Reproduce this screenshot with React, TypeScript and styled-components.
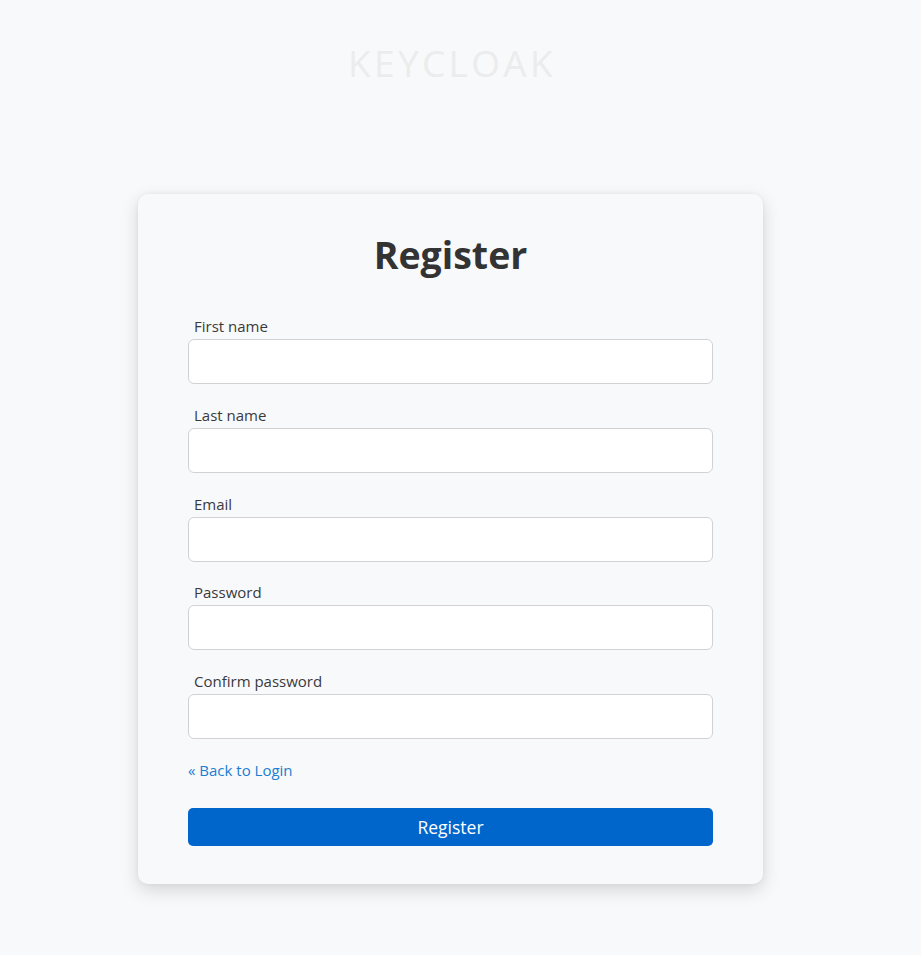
import styled, { createGlobalStyle } from 'styled-components';

const GlobalStyle = createGlobalStyle`
  html, body {
    margin: 0;
    padding: 0;
    background: #f8f9fb;
    font-family: 'Open Sans', 'Noto Sans', sans-serif;
    color: #333;
  }
  * {
    box-sizing: border-box;
  }
`;

const fields = ['First name', 'Last name', 'Email', 'Password', 'Confirm password'];

export default function App() {
  return (
    <Page>
      <GlobalStyle />
      <Brand>KEYCLOAK</Brand>
      <Card>
        <Title>Register</Title>
        <Form onSubmit={(e) => e.preventDefault()}>
          {fields.map((f) => (
            <Field key={f}>
              <Label>{f}</Label>
              <Input type={f.toLowerCase().includes('password') ? 'password' : 'text'} />
            </Field>
          ))}
          <BackLink href="#">« Back to Login</BackLink>
          <SubmitButton type="submit">Register</SubmitButton>
        </Form>
      </Card>
    </Page>
  );
}

const Page = styled.div`
  min-height: 955px;
  display: flex;
  flex-direction: column;
  align-items: center;
  padding: 40px 20px 0 0;
`;

const Brand = styled.div`
  font-size: 37px;
  letter-spacing: 3.3px;
  color: #ececec;
  line-height: 46px;
  margin-left: 3px;
`;

const Card = styled.div`
  margin-top: 108px;
  width: 625px;
  background: #f8f9fb;
  border-radius: 10px;
  box-shadow: 0 6px 18px rgba(0, 0, 0, 0.15), 0 0 4px rgba(0, 0, 0, 0.05);
  padding: 35px 50px 38px;
`;

const Title = styled.h1`
  margin: 0;
  text-align: center;
  font-size: 37.5px;
  font-weight: 700;
  line-height: 52px;
  color: #333;
`;

const Form = styled.form`
  margin-top: 35px;
  display: flex;
  flex-direction: column;
`;

const Field = styled.div`
  display: flex;
  flex-direction: column;
  margin-bottom: 20.75px;
`;

const Label = styled.label`
  font-size: 15px;
  line-height: 20px;
  padding-left: 6px;
  margin-bottom: 3px;
  color: #3a3a3a;
`;

const Input = styled.input`
  height: 45px;
  border: 1px solid #d2d2d6;
  border-radius: 6px;
  background: #fff;
  padding: 0 12px;
  font-family: inherit;
  font-size: 15px;
  outline: none;
`;

const BackLink = styled.a`
  font-size: 15px;
  line-height: 20px;
  color: #1a7ed1;
  text-decoration: none;
  margin-top: 0;
  align-self: flex-start;
`;

const SubmitButton = styled.button`
  margin-top: 28px;
  height: 38px;
  border: none;
  border-radius: 5px;
  background: #0066cc;
  color: #fff;
  font-family: inherit;
  font-size: 17.5px;
  cursor: pointer;
`;
